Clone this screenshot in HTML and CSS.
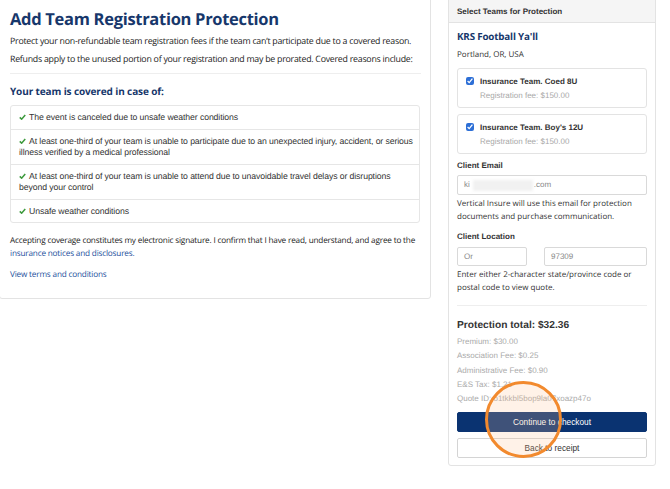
FILE: index.html
```html
<!DOCTYPE html>
<html lang="en">
<head>
<meta charset="utf-8">
<title>Team Registration Protection</title>
<link rel="stylesheet" href="styles.css">
</head>
<body>
<div class="page">
  <section class="offer">
    <h1 class="offer-title">Add Team Registration Protection</h1>
    <p class="lead">Protect your non-refundable team registration fees if the team can’t participate due to a covered reason. Refunds apply to the unused portion of your registration and may be prorated. Covered reasons include:</p>
    <hr class="rule">
    <h2 class="covered-title">Your team is covered in case of:</h2>
    <ul class="reasons">
      <li><svg class="tick" viewBox="0 0 8 7" aria-hidden="true"><path d="M0.8 3.9 L3 6 L7.2 1.2" /></svg>The event is canceled due to unsafe weather conditions</li>
      <li><svg class="tick" viewBox="0 0 8 7" aria-hidden="true"><path d="M0.8 3.9 L3 6 L7.2 1.2" /></svg>At least one-third of your team is unable to participate due to an unexpected injury, accident, or serious illness verified by a medical professional</li>
      <li><svg class="tick" viewBox="0 0 8 7" aria-hidden="true"><path d="M0.8 3.9 L3 6 L7.2 1.2" /></svg>At least one-third of your team is unable to attend due to unavoidable travel delays or disruptions beyond your control</li>
      <li><svg class="tick" viewBox="0 0 8 7" aria-hidden="true"><path d="M0.8 3.9 L3 6 L7.2 1.2" /></svg>Unsafe weather conditions</li>
    </ul>
    <p class="consent">Accepting coverage constitutes my electronic signature. I confirm that I have read, understand, and agree to the <a href="#" class="link">insurance notices and disclosures.</a></p>
    <p class="terms"><a href="#" class="link">View terms and conditions</a></p>
  </section>

  <aside class="quote">
    <div class="quote-head">Select Teams for Protection</div>
    <div class="quote-body">
      <h3 class="club">KRS Football Ya'll</h3>
      <p class="club-place">Portland, OR, USA</p>

      <label class="team">
        <input type="checkbox" class="team-check" checked>
        <span class="team-info">
          <span class="team-name">Insurance Team. Coed 8U</span>
          <span class="team-fee">Registration fee: $150.00</span>
        </span>
      </label>
      <label class="team">
        <input type="checkbox" class="team-check" checked>
        <span class="team-info">
          <span class="team-name">Insurance Team. Boy's 12U</span>
          <span class="team-fee">Registration fee: $150.00</span>
        </span>
      </label>

      <div class="field-label">Client Email</div>
      <div class="input input-email">ki<span class="masked"></span>.com</div>
      <p class="hint">Vertical Insure will use this email for protection documents and purchase communication.</p>

      <div class="field-label field-label-location">Client Location</div>
      <div class="location">
        <div class="input input-state">Or</div>
        <div class="input input-zip">97309</div>
      </div>
      <p class="hint hint-location">Enter either 2-character state/province code or postal code to view quote.</p>

      <hr class="rule rule-quote">

      <div class="total">Protection total: $32.36</div>
      <ul class="breakdown">
        <li>Premium: $30.00</li>
        <li>Association Fee: $0.25</li>
        <li>Administrative Fee: $0.90</li>
        <li>E&amp;S Tax: $1.21</li>
        <li>Quote ID: o1tkkbl5bop9la07xoazp47o</li>
      </ul>

      <div class="actions">
        <button class="btn btn-primary">Continue to checkout</button>
        <button class="btn btn-secondary">Back to receipt</button>
        <span class="click-ring"></span>
      </div>
    </div>
  </aside>
</div>
</body>
</html>
```

FILE: styles.css
```css
* { box-sizing: border-box; }

html, body {
  margin: 0;
  padding: 0;
  background: #ffffff;
}

body {
  font-family: "Liberation Sans", Arial, sans-serif;
  color: #333333;
  width: 670px;
  height: 489px;
  overflow: hidden;
  text-rendering: geometricPrecision;
}

/* Humanist copy face used by headings and prose */
.offer-title, .lead, .covered-title, .consent, .terms, .club, .club-place, .hint {
  font-family: "Open Sans", "DejaVu Sans", sans-serif;
}

.page {
  display: flex;
  align-items: flex-start;
  gap: 17px;
  margin-top: -4px;
  margin-left: -1px;
}

/* Left column: offer text */
.offer {
  width: 432px;
  border: 1px solid #e3e3e3;
  border-radius: 3px;
  padding: 11px 10px 16px 10px;
}

.offer-title {
  margin: 0;
  font-weight: bold;
  font-size: 16.5px;
  letter-spacing: -0.3px;
  line-height: 22px;
  color: #17376b;
}

.lead {
  margin: 2px 0 0;
  font-size: 8.8px;
  letter-spacing: -0.25px;
  line-height: 18px;
  color: #222222;
}

.rule {
  border: 0;
  border-top: 1px solid #eeeeee;
  margin: 5px 0 0;
  width: 411px;
}

.covered-title {
  margin: 10px 0 0;
  font-size: 10px;
  letter-spacing: -0.12px;
  line-height: 14px;
  font-weight: bold;
  color: #17376b;
}

.reasons {
  list-style: none;
  margin: 7px 0 0;
  padding: 0;
  width: 410px;
  border: 1px solid #e6e6e6;
  border-radius: 3px;
}

.reasons li {
  font-size: 8.7px;
  letter-spacing: -0.1px;
  line-height: 11.5px;
  padding: 6px 1px 5px 8px;
  border-top: 1px solid #e6e6e6;
  color: #333333;
}

.reasons li:first-child { border-top: 0; }

.tick {
  width: 7px;
  height: 6px;
  margin-right: 3px;
  vertical-align: 0;
  fill: none;
  stroke: #3d9a3d;
  stroke-width: 1.8;
}

.consent {
  margin: 12px 0 0;
  font-size: 8.2px;
  letter-spacing: -0.18px;
  line-height: 12.5px;
  color: #222222;
}

.terms {
  margin: 9px 0 0;
  font-size: 8.2px;
  letter-spacing: -0.18px;
  line-height: 12.5px;
}

.link {
  color: #1d4f9c;
  text-decoration: none;
}

/* Right column: quote panel */
.quote {
  width: 208px;
  border: 1px solid #e3e3e3;
  border-radius: 3px;
  overflow: hidden;
}

.quote-head {
  background: #f5f5f5;
  border-bottom: 1px solid #e3e3e3;
  font-weight: bold;
  font-size: 8px;
  line-height: 12px;
  padding: 9px 8px 4px;
  color: #333333;
}

.quote-body {
  padding: 7px 8px 7px;
}

.club {
  margin: 0;
  font-size: 9.8px;
  letter-spacing: -0.17px;
  line-height: 14px;
  font-weight: bold;
  color: #17376b;
}

.club-place {
  margin: 5px 0 0;
  font-size: 8px;
  line-height: 12px;
  color: #333333;
}

.team {
  display: flex;
  align-items: flex-start;
  gap: 6px;
  margin-top: 6px;
  padding: 7px 8px 6px;
  border: 1px solid #e3e3e3;
  border-radius: 3px;
}

.club-place + .team { margin-top: 7px; }

.team-check {
  margin: 1px 0 0;
  width: 8px;
  height: 8px;
  accent-color: #2d6fd6;
}

.team-info {
  display: flex;
  flex-direction: column;
  gap: 3px;
}

.team-name {
  font-weight: bold;
  font-size: 8px;
  line-height: 11px;
  color: #333333;
}

.team-fee {
  font-size: 8px;
  line-height: 11px;
  color: #a8a8a8;
}

.field-label {
  margin-top: 6px;
  font-weight: bold;
  font-size: 8px;
  line-height: 12px;
  color: #333333;
}

.field-label-location { margin-top: 8px; }

.input {
  margin-top: 3px;
  height: 20px;
  border: 1px solid #d9d9d9;
  border-radius: 2px;
  padding: 0 6px;
  font-size: 8px;
  line-height: 18px;
  color: #888888;
  display: flex;
  align-items: center;
}

.location .input {
  height: 19px;
  margin-top: 4px;
}

.masked {
  display: inline-block;
  width: 60px;
  height: 11px;
  margin: 0 1px 0 3px;
  background: #f1f1f1;
  filter: blur(1.5px);
}

.hint {
  margin: 2px 0 0;
  font-size: 8px;
  line-height: 13px;
  color: #333333;
}

.hint-location {
  margin-top: 3px;
  line-height: 12.5px;
}

.location {
  display: flex;
  gap: 17px;
}

.input-state { width: 70px; }
.input-zip { flex: 1; }

.rule-quote {
  width: auto;
  margin-top: 11px;
}

.total {
  margin-top: 12px;
  font-weight: bold;
  font-size: 10.2px;
  line-height: 15px;
  color: #333333;
}

.breakdown {
  list-style: none;
  margin: 2px 0 0;
  padding: 0;
}

.breakdown li {
  font-size: 8px;
  line-height: 14.3px;
  color: #aaaaaa;
}

.actions {
  position: relative;
  display: flex;
  flex-direction: column;
  gap: 6px;
  margin-top: 6px;
}

.btn {
  height: 20px;
  border-radius: 2px;
  font-family: "Liberation Sans", Arial, sans-serif;
  font-size: 8.3px;
  cursor: pointer;
}

.btn-primary {
  background: #0a3371;
  border: 1px solid #0a3371;
  color: #ffffff;
}

.btn-secondary {
  background: #ffffff;
  border: 1px solid #d4d4d4;
  color: #333333;
}

/* Tap highlight over the checkout button */
.click-ring {
  position: absolute;
  left: 28px;
  top: -31px;
  width: 77px;
  height: 77px;
  border-radius: 50%;
  border: 3px solid #f28a2e;
  background: rgba(255, 196, 150, 0.22);
  pointer-events: none;
}
```
